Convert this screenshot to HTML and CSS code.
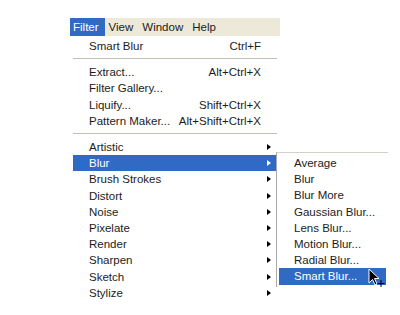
FILE: index.html
```html
<!DOCTYPE html>
<html lang="en">
<head>
    <meta charset="UTF-8">
    <title>Filter menu</title>
    <link rel="stylesheet" href="styles.css">
</head>
<body>
<div class="screen">

    <div class="menubar">
        <span class="bar-item active">Filter</span>
        <span class="bar-item">View</span>
        <span class="bar-item">Window</span>
        <span class="bar-item">Help</span>
    </div>

    <div class="menu">
        <div class="item"><span>Smart Blur</span><span class="key">Ctrl+F</span></div>
        <div class="sep"></div>
        <div class="item"><span>Extract...</span><span class="key">Alt+Ctrl+X</span></div>
        <div class="item"><span>Filter Gallery...</span></div>
        <div class="item"><span>Liquify...</span><span class="key">Shift+Ctrl+X</span></div>
        <div class="item"><span>Pattern Maker...</span><span class="key">Alt+Shift+Ctrl+X</span></div>
        <div class="sep"></div>
        <div class="item sub"><span>Artistic</span><i class="arrow"></i></div>
        <div class="item sub selected"><span>Blur</span><i class="arrow"></i></div>
        <div class="item sub"><span>Brush Strokes</span><i class="arrow"></i></div>
        <div class="item sub"><span>Distort</span><i class="arrow"></i></div>
        <div class="item sub"><span>Noise</span><i class="arrow"></i></div>
        <div class="item sub"><span>Pixelate</span><i class="arrow"></i></div>
        <div class="item sub"><span>Render</span><i class="arrow"></i></div>
        <div class="item sub"><span>Sharpen</span><i class="arrow"></i></div>
        <div class="item sub"><span>Sketch</span><i class="arrow"></i></div>
        <div class="item sub"><span>Stylize</span><i class="arrow"></i></div>

        <!-- Blur submenu -->
        <div class="submenu">
            <div class="item"><span>Average</span></div>
            <div class="item"><span>Blur</span></div>
            <div class="item"><span>Blur More</span></div>
            <div class="item"><span>Gaussian Blur...</span></div>
            <div class="item"><span>Lens Blur...</span></div>
            <div class="item"><span>Motion Blur...</span></div>
            <div class="item"><span>Radial Blur...</span></div>
            <div class="item selected"><span>Smart Blur...</span></div>
        </div>

        <svg class="cursor" width="18" height="20" viewBox="0 0 18 20">
            <path d="M1 1 L1 15 L4.5 11.5 L7 17 L9 16 L6.5 10.5 L11 10.5 Z" fill="#000" stroke="#fff" stroke-width="1"/>
            <path d="M13 12 V19 M9.5 15.5 H16.5" stroke="#000" stroke-width="1"/>
        </svg>
    </div>

</div>
</body>
</html>
```

FILE: styles.css
```css
* {
    margin: 0;
    padding: 0;
    box-sizing: border-box;
}

body {
    font-family: "Liberation Sans", Arial, sans-serif;
    font-size: 11.5px;
    color: #1c1c1c;
    background: #fff;
}

.screen {
    padding: 18px 0 0 70px;
}

.menubar {
    width: 210px;
    height: 18px;
    background: #ece9d8;
    display: flex;
    align-items: stretch;
}

.bar-item {
    padding: 0 5px 0 4px;
    line-height: 18px;
    white-space: nowrap;
}

.bar-item.active {
    background: #316ac5;
    color: #fff;
    padding: 0 6px 0 3px;
}

.menu {
    position: relative;
    width: 210px;
    padding: 2px 3px 4px;
}

.item {
    height: 16.2px;
    display: flex;
    align-items: center;
    justify-content: space-between;
    padding: 0 16px 0 16px;
    white-space: nowrap;
}

.item.selected {
    background: #316ac5;
    color: #fff;
}

.key {
    text-align: right;
}

.sep {
    height: 1px;
    background: #c5c2b2;
    margin: 4px 0 5px;
}

.arrow {
    width: 0;
    height: 0;
    border-top: 3.5px solid transparent;
    border-bottom: 3.5px solid transparent;
    border-left: 4px solid #000;
    margin-right: -10px;
}

.selected .arrow {
    border-left-color: #fff;
}

.submenu {
    position: absolute;
    left: 206px;
    top: 116px;
    width: 112px;
    background: #fff;
    border-left: 1px solid #a7a6aa;
    border-top: 1px solid #d4d0c8;
    padding: 2px;
}

.submenu .item {
    padding: 0 6px 0 15px;
}

.cursor {
    position: absolute;
    left: 298px;
    top: 232px;
}
```
